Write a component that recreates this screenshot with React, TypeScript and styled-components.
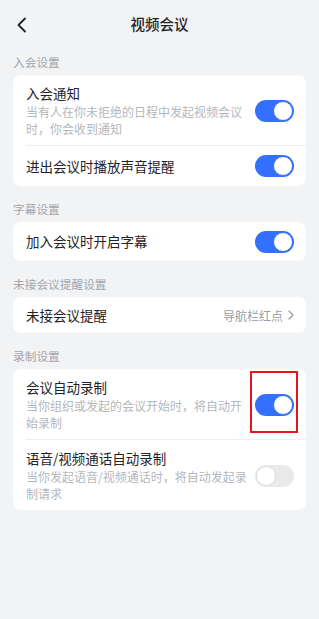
import React, { useState } from 'react';
import styled, { createGlobalStyle } from 'styled-components';

const GlobalStyle = createGlobalStyle`
  html, body {
    margin: 0;
    padding: 0;
    background: #f2f3f5;
  }
  body {
    font-family: "Noto Sans CJK SC", "Noto Sans", sans-serif;
    -webkit-font-smoothing: antialiased;
  }
`;

const Page = styled.div`
  width: 319px;
  min-height: 619px;
  background: #f2f3f5;
  display: flex;
  flex-direction: column;
`;

const Header = styled.div`
  height: 44px;
  display: grid;
  grid-template-columns: 44px 1fr 44px;
  align-items: center;
`;

const BackButton = styled.div`
  display: flex;
  align-items: center;
  justify-content: center;
  height: 44px;
  margin-top: 3px;
`;

const Title = styled.div`
  text-align: center;
  font-size: 14.5px;
  font-weight: 500;
  color: #1f2329;
`;

const Section = styled.div`
  display: flex;
  flex-direction: column;
  margin-bottom: 5px;
`;

const SectionLabel = styled.div`
  padding: 11px 13px 6px;
  font-size: 11.7px;
  line-height: 14px;
  color: #a2a5ab;
`;

const Card = styled.div`
  margin: 0 13px;
  background: #fff;
  border-radius: 8px;
  display: flex;
  flex-direction: column;
`;

const Row = styled.div<{ $height?: number; $divider?: boolean }>`
  position: relative;
  display: flex;
  align-items: center;
  gap: 5px;
  padding: ${p => (p.$height ? '0' : '9px')} 12px ${p => (p.$height ? '0' : '8px')} 13px;
  min-height: ${p => (p.$height ? `${p.$height}px` : 'auto')};
  border-top: ${p => (p.$divider ? '1px solid #eceef1' : 'none')};
  margin-left: ${p => (p.$divider ? '13px' : '0')};
  padding-left: ${p => (p.$divider ? '0' : '13px')};
`;

const TextBlock = styled.div`
  flex: 1;
  display: flex;
  flex-direction: column;
`;

const RowTitle = styled.div`
  font-size: 13.5px;
  line-height: 19px;
  color: #1f2329;
`;

const RowDesc = styled.div`
  font-size: 12px;
  line-height: 17px;
  color: #b4b7bc;
  white-space: nowrap;
`;

const RightText = styled.div`
  display: flex;
  align-items: center;
  gap: 5px;
  font-size: 12px;
  color: #9a9da3;
`;

const Track = styled.div<{ $on: boolean }>`
  flex: none;
  width: 39px;
  height: 22px;
  border-radius: 11px;
  box-sizing: border-box;
  background: ${p => (p.$on ? '#3370ff' : '#e8e9eb')};
  display: flex;
  align-items: center;
  justify-content: ${p => (p.$on ? 'flex-end' : 'flex-start')};
  padding: 1px;
  cursor: pointer;
`;

const Knob = styled.div<{ $on: boolean }>`
  width: 20px;
  height: 20px;
  border-radius: 50%;
  background: #fff;
  box-sizing: border-box;
  border: 1px solid ${p => (p.$on ? '#3370ff' : '#dcdee2')};
`;

const Highlight = styled.div`
  position: absolute;
  right: 8px;
  top: 2px;
  width: 48px;
  height: 62px;
  box-sizing: border-box;
  border: 2.5px solid #e8141b;
  pointer-events: none;
`;

const Toggle: React.FC<{ initial: boolean }> = ({ initial }) => {
  const [on, setOn] = useState(initial);
  return (
    <Track $on={on} onClick={() => setOn(!on)}>
      <Knob $on={on} />
    </Track>
  );
};

const App: React.FC = () => {
  return (
    <Page>
      <GlobalStyle />
      <Header>
        <BackButton>
          <svg width="12" height="16" viewBox="0 0 12 16">
            <path d="M9 1.5 L2.5 8 L9 14.5" fill="none" stroke="#1f2329" strokeWidth="1.8" strokeLinecap="round" strokeLinejoin="round" />
          </svg>
        </BackButton>
        <Title>视频会议</Title>
        <div />
      </Header>

      <Section>
        <SectionLabel>入会设置</SectionLabel>
        <Card>
          <Row>
            <TextBlock>
              <RowTitle>入会通知</RowTitle>
              <RowDesc>
                当有人在你未拒绝的日程中发起视频会议
                <br />
                时，你会收到通知
              </RowDesc>
            </TextBlock>
            <Toggle initial={true} />
          </Row>
          <Row $height={40} $divider>
            <TextBlock>
              <RowTitle>进出会议时播放声音提醒</RowTitle>
            </TextBlock>
            <Toggle initial={true} />
          </Row>
        </Card>
      </Section>

      <Section>
        <SectionLabel>字幕设置</SectionLabel>
        <Card>
          <Row $height={39}>
            <TextBlock>
              <RowTitle>加入会议时开启字幕</RowTitle>
            </TextBlock>
            <Toggle initial={true} />
          </Row>
        </Card>
      </Section>

      <Section>
        <SectionLabel>未接会议提醒设置</SectionLabel>
        <Card>
          <Row $height={36}>
            <TextBlock>
              <RowTitle>未接会议提醒</RowTitle>
            </TextBlock>
            <RightText>
              导航栏红点
              <svg width="6" height="10" viewBox="0 0 6 10">
                <path d="M1 1 L5 5 L1 9" fill="none" stroke="#9a9da3" strokeWidth="1.3" strokeLinecap="round" strokeLinejoin="round" />
              </svg>
            </RightText>
          </Row>
        </Card>
      </Section>

      <Section>
        <SectionLabel>录制设置</SectionLabel>
        <Card>
          <Row>
            <TextBlock>
              <RowTitle>会议自动录制</RowTitle>
              <RowDesc>
                当你组织或发起的会议开始时，将自动开
                <br />
                始录制
              </RowDesc>
            </TextBlock>
            <Toggle initial={true} />
            <Highlight />
          </Row>
          <Row $divider>
            <TextBlock>
              <RowTitle>语音/视频通话自动录制</RowTitle>
              <RowDesc>
                当你发起语音/视频通话时，将自动发起录
                <br />
                制请求
              </RowDesc>
            </TextBlock>
            <Toggle initial={false} />
          </Row>
        </Card>
      </Section>
    </Page>
  );
};

export default App;
